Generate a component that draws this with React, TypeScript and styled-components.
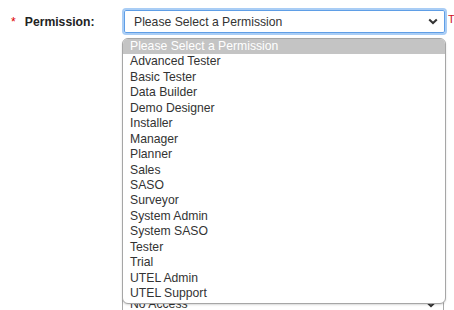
import React from 'react';
import styled, { createGlobalStyle } from 'styled-components';

const GlobalStyle = createGlobalStyle`
  body {
    margin: 0;
    background: #ffffff;
    font-family: "Liberation Sans", Arial, sans-serif;
    overflow: hidden;
  }
`;

const Page = styled.div`
  padding-top: 8px;
  width: 454px;
  height: 310px;
  box-sizing: border-box;
  overflow: hidden;
`;

const FieldRow = styled.div<{ $gap?: number }>`
  display: flex;
  align-items: center;
  margin-top: ${(p) => p.$gap ?? 0}px;
`;

const LabelCell = styled.label`
  width: 122px;
  flex-shrink: 0;
  box-sizing: border-box;
  padding-left: 11px;
  display: flex;
  align-items: center;
  font-size: 12.2px;
  font-weight: bold;
  color: #222;
`;

const Required = styled.span`
  color: #e00000;
  font-weight: normal;
  margin-right: 9px;
`;

const SelectWrap = styled.div<{ $width: number }>`
  position: relative;
  width: ${(p) => p.$width}px;
  flex-shrink: 0;
`;

const SelectBox = styled.div<{ $focused?: boolean }>`
  height: ${(p) => (p.$focused ? 27 : 26)}px;
  box-sizing: border-box;
  display: flex;
  align-items: center;
  justify-content: space-between;
  padding: 0 7px 0 ${(p) => (p.$focused ? 10 : 7)}px;
  border: ${(p) => (p.$focused ? '2px solid #a9cdf5' : '1px solid #a9a9a9')};
  box-shadow: ${(p) => (p.$focused ? 'inset 0 0 0 1px #5f9ee6' : 'none')};
  border-radius: 4px;
  background: #fff;
  font-size: 12.2px;
  color: #333;
`;

const ErrorHint = styled.span`
  margin-left: 1px;
  color: #d0101e;
  font-size: 11px;
  white-space: nowrap;
  align-self: flex-start;
  margin-top: 5px;
`;

const Dropdown = styled.ul`
  position: absolute;
  top: 30px;
  left: 0;
  width: 322px;
  margin: 0;
  padding: 0 0 2px;
  list-style: none;
  background: #fff;
  border: 1px solid #a6a6a6;
  border-radius: 6px;
  overflow: hidden;
  box-shadow: 0 1px 2px rgba(0, 0, 0, 0.15);
  z-index: 10;
`;

const Option = styled.li<{ $active?: boolean }>`
  height: 15.45px;
  line-height: 15.45px;
  padding-left: 7px;
  font-size: 12.2px;
  white-space: nowrap;
  color: ${(p) => (p.$active ? '#ffffff' : '#333')};
  background: ${(p) => (p.$active ? '#c4c4c4' : 'transparent')};
`;

const Chevron = () => (
  <svg width="10" height="7" viewBox="0 0 10 7">
    <path d="M1.2 1.4 L5 5 L8.8 1.4" fill="none" stroke="#333" strokeWidth="2" />
  </svg>
);

const options = [
  'Please Select a Permission',
  'Advanced Tester',
  'Basic Tester',
  'Data Builder',
  'Demo Designer',
  'Installer',
  'Manager',
  'Planner',
  'Sales',
  'SASO',
  'Surveyor',
  'System Admin',
  'System SASO',
  'Tester',
  'Trial',
  'UTEL Admin',
  'UTEL Support',
];

export default function App() {
  return (
    <Page>
      <GlobalStyle />
      <FieldRow>
        <LabelCell>
          <Required>*</Required>
          Permission:
        </LabelCell>
        <SelectWrap $width={325}>
          <SelectBox $focused>
            <span>Please Select a Permission</span>
            <Chevron />
          </SelectBox>
          <Dropdown>
            {options.map((o, i) => (
              <Option key={o} $active={i === 0}>
                {o}
              </Option>
            ))}
          </Dropdown>
        </SelectWrap>
        <ErrorHint>This field is required</ErrorHint>
      </FieldRow>
      <FieldRow $gap={256}>
        <LabelCell />
        <SelectWrap $width={322}>
          <SelectBox>
            <span>No Access</span>
            <Chevron />
          </SelectBox>
        </SelectWrap>
      </FieldRow>
    </Page>
  );
}
